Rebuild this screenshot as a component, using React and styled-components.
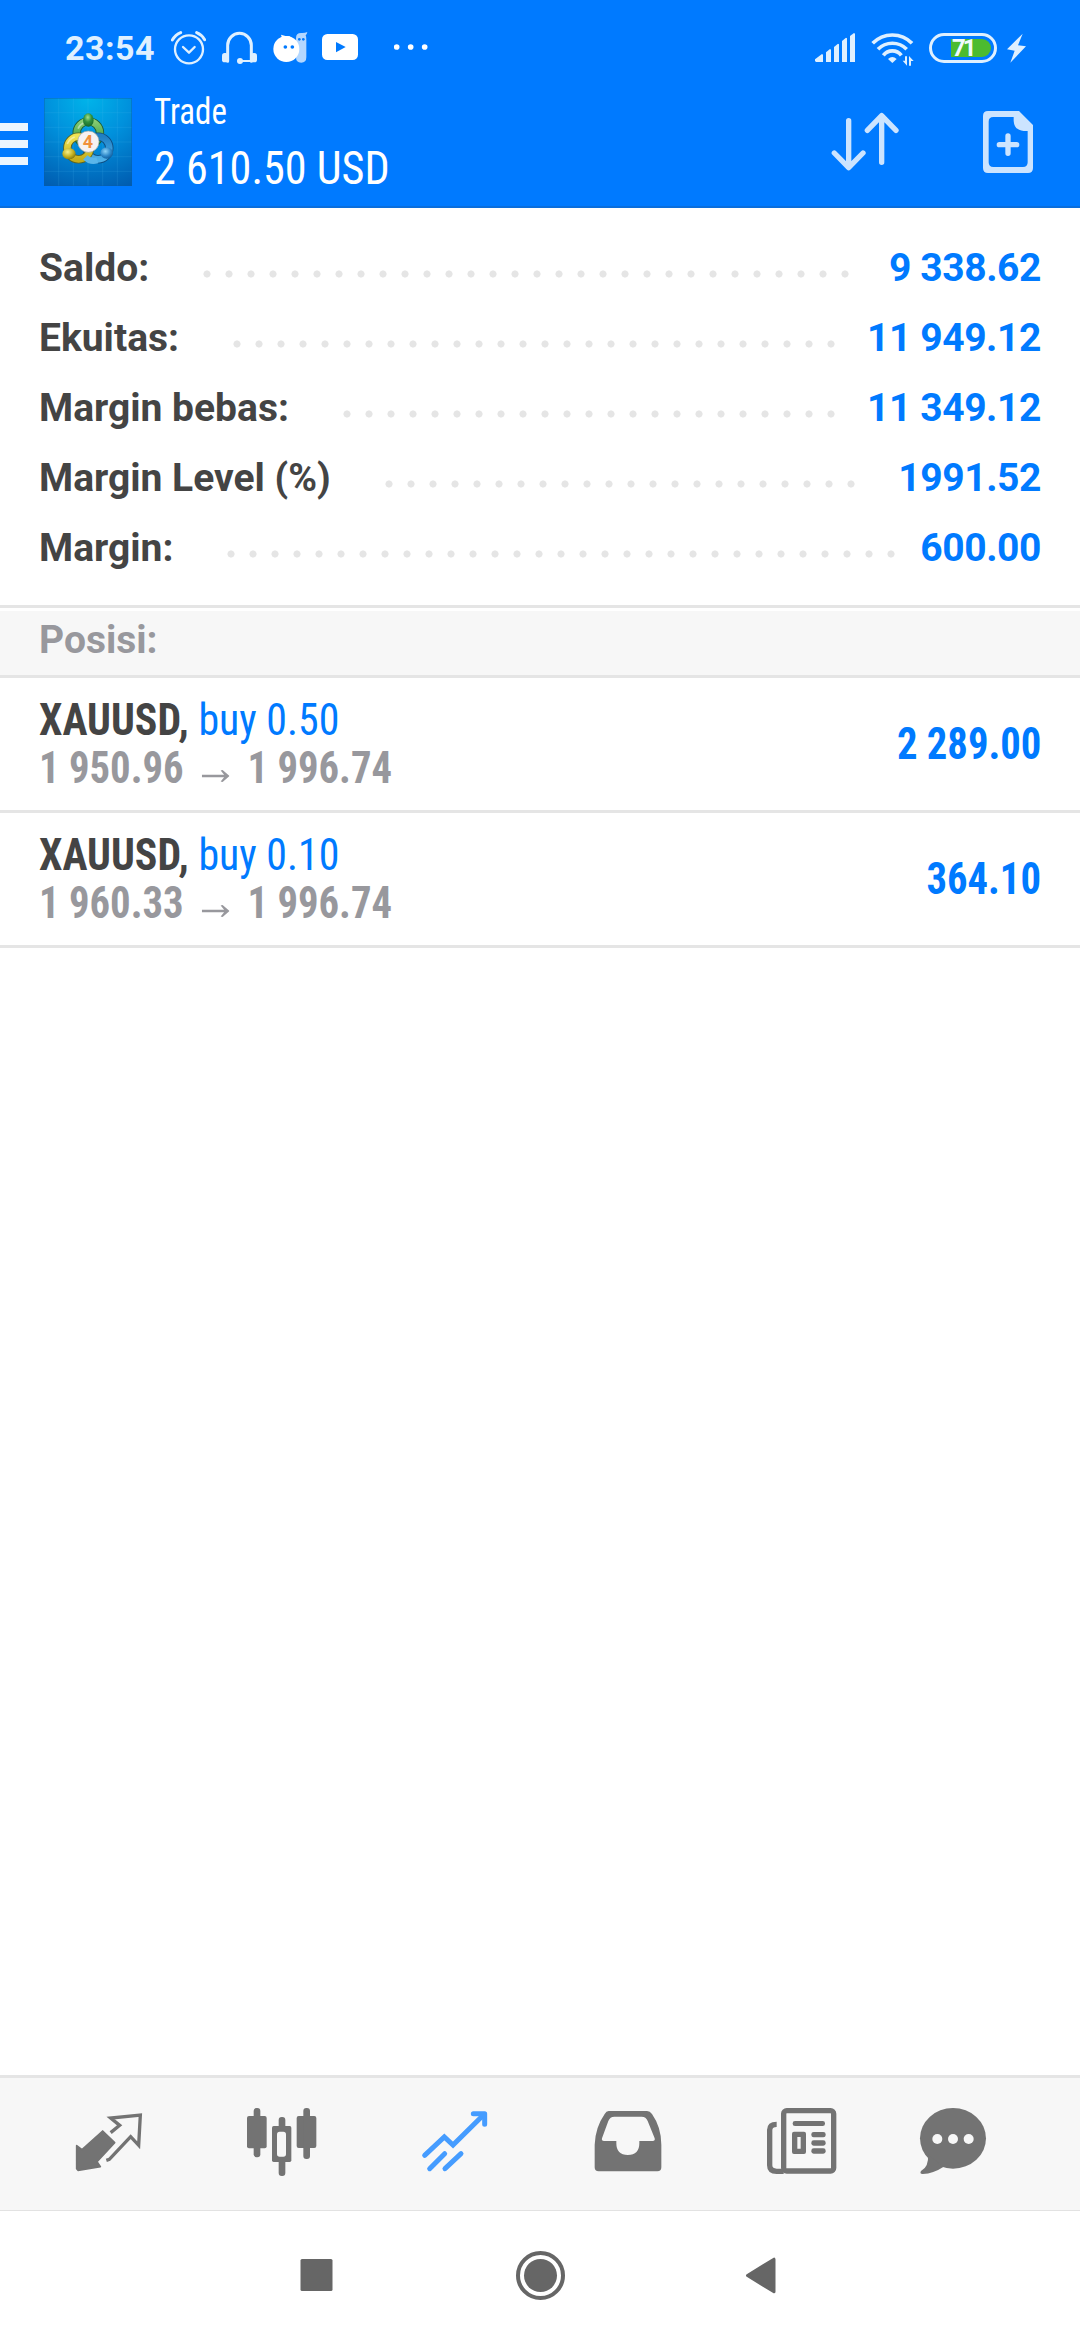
import React from "react";
import styled, { createGlobalStyle } from "styled-components";

const summary = [
  { label: "Saldo:", value: "9 338.62", dots: 30 },
  { label: "Ekuitas:", value: "11 949.12", dots: 28 },
  { label: "Margin bebas:", value: "11 349.12", dots: 23 },
  { label: "Margin Level (%)", value: "1991.52", dots: 22 },
  { label: "Margin:", value: "600.00", dots: 31 },
];

const positions = [
  { symbol: "XAUUSD,", side: "buy 0.50", open: "1 950.96", current: "1 996.74", profit: "2 289.00" },
  { symbol: "XAUUSD,", side: "buy 0.10", open: "1 960.33", current: "1 996.74", profit: "364.10" },
];

function StatusBar() {
  return (
    <StatusContainer>
      <Clock>23:54</Clock>
      <StatusIcon $width={35} $gap={16} viewBox="0 0 105 108">
        <g fill="none" stroke="#dff0ff" strokeWidth="7" strokeLinecap="round">
          <circle cx="54" cy="58" r="42" />
          <path d="M36 51 L54 68 L71 51" strokeLinejoin="round" />
          <path d="M4 30 Q14 14 29 8 M77 8 Q92 14 101 29" strokeWidth="9" />
        </g>
      </StatusIcon>
      <StatusIcon $width={35} $gap={16} viewBox="0 0 105 108">
        <path d="M17 94 V46 A35.5 36 0 0 1 88 46 V94" fill="none" stroke="#dff0ff" strokeWidth="9" strokeLinecap="round" />
        <rect x="0" y="69" width="18" height="28" rx="8" fill="#dff0ff" />
        <rect x="87" y="69" width="18" height="28" rx="8" fill="#dff0ff" />
        <path d="M54 93 H90" stroke="#dff0ff" strokeWidth="6" />
        <circle cx="54" cy="93" r="9" fill="#dff0ff" />
      </StatusIcon>
      <StatusIcon $width={35} $gap={14} viewBox="0 0 105 108">
        <path d="M69 24 Q69 9 84 9 Q94 10 103 6 Q102 13 98 16 Q100 20 100 28 V82 Q100 98 84.500 98 Q69 98 69 82Z" fill="#b3d7ff" />
        <circle cx="79" cy="28" r="4" fill="#007aff" />
        <circle cx="91" cy="28" r="4" fill="#007aff" />
        <circle cx="40" cy="57" r="39" fill="#fff" />
        <path d="M27 24 L24 14 Q38 19 50 19 L56 26Z" fill="#fff" />
        <circle cx="37" cy="51" r="5.500" fill="#007aff" />
        <circle cx="58" cy="51" r="5.500" fill="#007aff" />
      </StatusIcon>
      <StatusIcon $width={36} $gap={36} viewBox="0 0 108 108">
        <rect y="12" width="108" height="78" rx="16" fill="#fff" />
        <path d="M42 36 L71 51 L42 67Z" fill="#007aff" />
      </StatusIcon>
      <StatusIcon $width={34} viewBox="0 0 102 108" fill="#fff">
        <circle cx="8" cy="51" r="8.500" />
        <circle cx="50" cy="51" r="8.500" />
        <circle cx="92" cy="51" r="8.500" />
      </StatusIcon>

      <StatusRight>
        <StatusIcon $width={40} $gap={16} viewBox="0 0 120 108" fill="#dff0ff">
          <path d="M0 93 V88 L21 72 L24 74 V96 H3Z" />
          <path d="M33 67 L45 57 L48 59 V96 H33Z" />
          <path d="M57 51 L69 41 L72 43 V96 H57Z" />
          <path d="M81 33 L93 23 L96 25 V96 H81Z" />
          <path d="M105 18 L117 9 L120 11 V96 H105Z" />
        </StatusIcon>
        <StatusIcon $width={43} $gap={15} viewBox="0 0 129 108">
          <g fill="none" stroke="#dff0ff" strokeWidth="11">
            <path d="M5 40 A82 82 0 0 1 123 40" />
            <path d="M21 58 A60 60 0 0 1 107 58" />
            <path d="M37 76 A34 34 0 0 1 91 76" />
          </g>
          <path d="M51 87 Q64 75 77 87 L64 99Z" fill="#dff0ff" />
          <path d="M108 79 V107 L95 92 H102 V79Z M114 107 V78 L128 93 H120 V107Z" fill="#dff0ff" />
        </StatusIcon>
        <Battery>
          <BatteryLevel>71</BatteryLevel>
        </Battery>
        <StatusIcon $width={19} viewBox="0 0 57 108">
          <path d="M47 11 L0 58 L23 62 L10 98 L57 49 L33 46Z" fill="#dff0ff" />
        </StatusIcon>
      </StatusRight>
    </StatusContainer>
  );
}

function AppLogo() {
  return (
    <LogoSvg viewBox="0 0 264 264">
      <defs>
        <radialGradient id="sky" cx="0.5" cy="0" r="1.1">
          <stop offset="0" stopColor="#00b4ea" />
          <stop offset="0.45" stopColor="#0090dc" />
          <stop offset="1" stopColor="#005cb0" />
        </radialGradient>
        <linearGradient id="green" x1="0" y1="0" x2="0" y2="1">
          <stop offset="0" stopColor="#86cc72" />
          <stop offset="1" stopColor="#2f8f3a" />
        </linearGradient>
        <linearGradient id="yellow" x1="0" y1="0" x2="0" y2="1">
          <stop offset="0" stopColor="#f2e454" />
          <stop offset="1" stopColor="#c4ae1c" />
        </linearGradient>
        <linearGradient id="blue" x1="0" y1="0" x2="0" y2="1">
          <stop offset="0" stopColor="#1f7fc4" />
          <stop offset="1" stopColor="#4db0e8" />
        </linearGradient>
        <radialGradient id="greenKnob" cx="0.45" cy="0.3" r="0.7">
          <stop offset="0" stopColor="#a5e08c" />
          <stop offset="0.5" stopColor="#2f9140" />
          <stop offset="1" stopColor="#176a2a" />
        </radialGradient>
        <radialGradient id="yellowKnob" cx="0.4" cy="0.35" r="0.7">
          <stop offset="0" stopColor="#f6f08c" />
          <stop offset="0.6" stopColor="#c2b020" />
          <stop offset="1" stopColor="#7d7210" />
        </radialGradient>
        <radialGradient id="blueKnob" cx="0.4" cy="0.35" r="0.7">
          <stop offset="0" stopColor="#8ed4f8" />
          <stop offset="0.6" stopColor="#2b86c8" />
          <stop offset="1" stopColor="#0f5a98" />
        </radialGradient>
      </defs>
      <rect width="264" height="264" fill="url(#sky)" />
      <path
        d="M44 0V264 M88 0V264 M132 0V264 M176 0V264 M220 0V264 M0 44H264 M0 88H264 M0 132H264 M0 176H264 M0 220H264"
        stroke="#5cc4f4"
        strokeOpacity="0.22"
        strokeWidth="2"
      />
      <rect x="1" y="1" width="262" height="262" fill="none" stroke="#0a5ea8" strokeOpacity="0.6" strokeWidth="2" />
      <g fill="none">
        <circle cx="133" cy="105" r="35" stroke="#1d5c34" strokeWidth="25" />
        <circle cx="133" cy="105" r="35" stroke="url(#green)" strokeWidth="20" />
        <circle cx="162" cy="150" r="34" stroke="#0d4c80" strokeWidth="25" />
        <circle cx="162" cy="150" r="34" stroke="url(#blue)" strokeWidth="20" />
        <circle cx="104" cy="150" r="34" stroke="#5d6420" strokeWidth="25" />
        <circle cx="104" cy="150" r="34" stroke="url(#yellow)" strokeWidth="20" />
        <path d="M70 138 A36 36 0 0 1 92 117 M102 92 A34 34 0 0 1 118 75" stroke="#fff" strokeOpacity="0.45" strokeWidth="5" />
        <path d="M124 178 A36 36 0 0 0 160 187" stroke="#5ab6ea" strokeWidth="18" />
      </g>
      <ellipse cx="133" cy="66" rx="16" ry="20" fill="url(#greenKnob)" />
      <ellipse cx="75" cy="167" rx="20" ry="17" fill="url(#yellowKnob)" />
      <ellipse cx="188" cy="165" rx="19" ry="17" fill="url(#blueKnob)" />
      <circle cx="133" cy="131" r="32" fill="#f6f2f2" stroke="#9aa3a0" strokeWidth="2" />
      <text x="132" y="150" textAnchor="middle" fontFamily="Roboto, sans-serif" fontSize="54" fontWeight="700" fill="#f0913c">
        4
      </text>
    </LogoSvg>
  );
}

function Header() {
  return (
    <HeaderContainer>
      <StatusBar />
      <Toolbar>
        <MenuButton aria-label="menu">
          <span />
          <span />
          <span />
        </MenuButton>
        <AppLogo />
        <Titles>
          <Title $scale={0.89}>Trade</Title>
          <Amount $scale={0.94}>2 610.50 USD</Amount>
        </Titles>
        <SortIcon viewBox="0 0 204 180">
          <path d="M53 26 V166 M10 123 L53 167 L96 123 M152 151 V12 M109 55 L152 11 L195 55" />
        </SortIcon>
        <NewOrderIcon viewBox="0 0 150 186">
          <path
            fillRule="evenodd"
            d="M15 0 H108 L150 42 V171 Q150 186 135 186 H15 Q0 186 0 171 V15 Q0 0 15 0Z M31 18 Q17 18 17 32 V154 Q17 168 31 168 H120 Q134 168 134 154 V60 H122 Q94 58 92 30 V18Z"
          />
          <path d="M49 101 H101 M75 75 V127" stroke="#cce4ff" strokeWidth="16" strokeLinecap="round" />
        </NewOrderIcon>
      </Toolbar>
    </HeaderContainer>
  );
}

function TabBar() {
  return (
    <Tabs>
      <Tab>
        <TabIcon viewBox="0 0 216 216">
          <path
            d="M89 69 L125 104 L72 161 L82 176 L15 187 L11 182 V113 L27 125Z"
            strokeWidth="5"
            stroke="currentColor"
            strokeLinejoin="round"
          />
          <path
            d="M113 74 L140 52 L113 30 L202 21 L197 112 L173 86 L109 154 L100 157"
            fill="none"
            stroke="currentColor"
            strokeWidth="10"
          />
        </TabIcon>
      </Tab>
      <Tab>
        <TabIcon viewBox="0 0 216 216">
          <rect x="3" y="24" width="59" height="97" rx="6" />
          <rect x="23" y="0" width="20" height="148" rx="9" />
          <rect x="152" y="24" width="59" height="96" rx="6" />
          <rect x="172" y="0" width="20" height="153" rx="9" />
          <rect x="98" y="27" width="20" height="177" rx="9" />
          <rect x="78" y="54" width="58" height="108" rx="5" />
          <rect x="93" y="71" width="27" height="75" rx="8" fill="#f7f7f7" />
        </TabIcon>
      </Tab>
      <Tab $active>
        <TabIcon viewBox="0 0 216 216">
          <g fill="none" stroke="currentColor" strokeWidth="15" strokeLinecap="round">
            <path d="M17 142 L76 87 L102 111 L194 20" />
            <path d="M163 17 H197 V49" strokeLinejoin="round" />
            <path d="M32 182 L77 137 M78 182 L126 137" />
          </g>
        </TabIcon>
      </Tab>
      <Tab>
        <TabIcon viewBox="0 0 216 216">
          <path
            fillRule="evenodd"
            d="M50 9 H165 Q174 9 180 18 Q208 58 208 110 V178 Q208 190 196 190 H20 Q8 190 8 178 V110 Q10 58 38 18 Q43 9 50 9Z M73 99 H36 Q28 99 30 91 L49 39 Q54 26 67 26 H149 Q162 26 167 39 L188 91 Q190 99 182 99 H142 V106 Q142 141 107.500 141 Q73 141 73 106Z"
          />
        </TabIcon>
      </Tab>
      <Tab>
        <TabIcon viewBox="0 0 216 216">
          <g fill="none" stroke="currentColor" strokeWidth="16">
            <rect x="56" y="8" width="150" height="181" rx="9" />
            <path d="M35 49 Q14 49 14 66 V172 Q14 190 35 190 H56" />
          </g>
          <rect x="83" y="39" width="97" height="15" rx="7" />
          <path fillRule="evenodd" d="M87 71 H117 Q123 71 123 77 V132 Q123 138 117 138 H87 Q81 138 81 132 V77 Q81 71 87 71Z M97 87 V122 H107 V87Z" />
          <rect x="139" y="72" width="43" height="16" rx="7" />
          <rect x="139" y="97" width="43" height="16" rx="7" />
          <rect x="139" y="121" width="43" height="16" rx="7" />
        </TabIcon>
      </Tab>
      <Tab $width={132}>
        <TabIcon viewBox="0 0 216 216">
          <ellipse cx="108" cy="91" rx="99" ry="91" />
          <path d="M33 140 Q36 176 12 189 Q7 198 17 198 Q50 196 80 176Z" />
          <g fill="#f7f7f7">
            <circle cx="61" cy="93" r="15" />
            <circle cx="108" cy="93" r="15" />
            <circle cx="155" cy="93" r="15" />
          </g>
        </TabIcon>
      </Tab>
    </Tabs>
  );
}

function SystemNav() {
  return (
    <NavContainer>
      <NavIcon viewBox="0 0 49 49">
        <rect x="8.500" y="8" width="32" height="32" rx="1.500" />
      </NavIcon>
      <NavIcon viewBox="0 0 49 49">
        <circle cx="24.500" cy="24.500" r="22.500" fill="none" stroke="#666" strokeWidth="4" />
        <circle cx="24.500" cy="24.500" r="16.500" />
      </NavIcon>
      <NavIcon viewBox="0 0 49 49">
        <path d="M7.500 24.500 L34 8.200 V40.800Z" stroke="#666" strokeWidth="3" strokeLinejoin="round" />
      </NavIcon>
    </NavContainer>
  );
}

function App() {
  return (
    <Screen>
      <GlobalStyle />
      <Header />
      <Summary>
        {summary.map((row) => (
          <SummaryRow key={row.label}>
            <span>{row.label}</span>
            <Leader $dots={row.dots} />
            <SummaryValue>{row.value}</SummaryValue>
          </SummaryRow>
        ))}
      </Summary>
      <SectionTitle>Posisi:</SectionTitle>
      {positions.map((position) => (
        <PositionRow key={position.side}>
          <div>
            <PositionLine $scale={0.951}>
              <Symbol>{position.symbol}</Symbol> <Side>{position.side}</Side>
            </PositionLine>
            <PriceLine $scale={0.925}>
              <span>{position.open}</span>
              <PriceArrow viewBox="0 0 28 12" preserveAspectRatio="none">
                <path d="M0 4.700 H22.500 L19 0.500 L21 0 L28 6 L21 12 L19 11.500 L22.500 7.300 H0Z" />
              </PriceArrow>
              <span>{position.current}</span>
            </PriceLine>
          </div>
          <Profit $scale={0.924}>{position.profit}</Profit>
        </PositionRow>
      ))}
      <TabBar />
      <SystemNav />
    </Screen>
  );
}

const GlobalStyle = createGlobalStyle`
  * {
    box-sizing: border-box;
  }
  body {
    margin: 0;
    background: #fff;
    font-family: Roboto, sans-serif;
  }
  svg {
    display: block;
    flex-shrink: 0;
  }
`;

const Screen = styled.div`
  display: flex;
  flex-direction: column;
  width: 1080px;
  height: 2340px;
  overflow: hidden;
  background: #fff;
`;

const HeaderContainer = styled.header`
  height: 208px;
  background: #007aff;
  border-bottom: 2px solid #0a6edc;
`;

const StatusContainer = styled.div`
  display: flex;
  align-items: center;
  height: 76px;
  padding: 20px 54px 0 65px;
`;

const Clock = styled.div`
  width: 90px;
  margin-right: 16px;
  color: #dff0ff;
  font-size: 34px;
  font-weight: 700;
  letter-spacing: 0.5px;
  white-space: nowrap;
`;

const StatusIcon = styled.svg`
  width: ${(props) => props.$width}px;
  height: 36px;
  margin-right: ${(props) => props.$gap || 0}px;
`;

const StatusRight = styled.div`
  display: flex;
  align-items: center;
  margin-left: auto;
`;

const Battery = styled.div`
  display: flex;
  justify-content: flex-end;
  align-items: center;
  width: 68px;
  height: 30px;
  margin-right: 10px;
  padding-right: 3px;
  border: 3px solid #dff0ff;
  border-radius: 15px;
`;

const BatteryLevel = styled.div`
  width: 40px;
  height: 18px;
  padding-left: 1px;
  border-radius: 0 9px 9px 0;
  background: #4cbb2f;
  color: #f0faff;
  font-size: 24px;
  font-weight: 700;
  line-height: 19px;
  letter-spacing: -3px;
`;

const Toolbar = styled.div`
  display: flex;
  align-items: center;
  height: 132px;
  padding-right: 47px;
`;

const MenuButton = styled.div`
  display: flex;
  flex-direction: column;
  gap: 9px;
  width: 28px;
  margin-right: 16px;
  padding-top: 3px;

  span {
    height: 8px;
    background: #ebf5ff;
  }
`;

const LogoSvg = styled.svg`
  width: 88px;
  height: 88px;
`;

// narrow text, squeezed a little further than the font itself
const Condensed = styled.div`
  font-family: "Roboto Condensed", Roboto, sans-serif;
  white-space: nowrap;
  transform: scaleX(${(props) => props.$scale});
  transform-origin: left;
`;

const Titles = styled.div`
  flex: 1;
  margin-left: 22px;
  padding-bottom: 4px;
  color: #fff;
`;

const Title = styled(Condensed)`
  font-size: 37px;
  line-height: 56px;
`;

const Amount = styled(Condensed)`
  font-size: 47px;
  line-height: 56px;
`;

const SortIcon = styled.svg`
  width: 68px;
  height: 60px;
  margin-right: 84px;
  fill: none;
  stroke: #cce4ff;
  stroke-width: 16;
  stroke-linecap: round;
  stroke-linejoin: round;
`;

const NewOrderIcon = styled.svg`
  width: 50px;
  height: 62px;
  fill: #cce4ff;
`;

const Summary = styled.section`
  padding: 25px 39px 22px;
`;

const SummaryRow = styled.div`
  display: flex;
  align-items: center;
  height: 70px;
  color: #444;
  font-size: 39px;
  font-weight: 700;
  white-space: nowrap;
`;

const Leader = styled.div`
  width: ${(props) => props.$dots * 22}px;
  height: 22px;
  margin: 12px 0 0 47px;
  background: radial-gradient(circle, #e5e5e5 3.2px, transparent 3.900px) 0 0 / 22px 22px repeat-x;
`;

const SummaryValue = styled.span`
  margin-left: auto;
  color: #007aff;
  letter-spacing: -0.4px;
`;

const SectionTitle = styled.h2`
  height: 73px;
  margin: 0;
  padding: 0 39px;
  border-top: 3px solid #e5e5e5;
  border-bottom: 3px solid #e5e5e5;
  background: linear-gradient(#fff 3px, #f7f7f7 3px);
  color: #98989d;
  font-size: 39px;
  font-weight: 700;
  line-height: 64px;
`;

const PositionRow = styled.div`
  display: flex;
  justify-content: space-between;
  align-items: center;
  height: 135px;
  padding: 0 39px;
  border-bottom: 3px solid #e5e5e5;
  font-size: 44px;
`;

const PositionLine = styled(Condensed)`
  line-height: 48px;
`;

const Symbol = styled.span`
  color: #444;
  font-weight: 700;
`;

const Side = styled.span`
  color: #007aff;
`;

const PriceLine = styled(Condensed)`
  display: flex;
  align-items: center;
  color: #98989d;
  font-weight: 700;
  line-height: 48px;
`;

const PriceArrow = styled.svg`
  width: 30px;
  height: 12px;
  margin: 15px 19px 0 20px;
  fill: currentColor;
`;

const Profit = styled(Condensed)`
  color: #007aff;
  font-weight: 700;
  transform-origin: right;
`;

const Tabs = styled.nav`
  display: flex;
  height: 136px;
  margin-top: auto;
  padding-left: 22px;
  border-top: 3px solid #e5e5e5;
  border-bottom: 1px solid #e2e2e2;
  background: #f7f7f7;
`;

const Tab = styled.div`
  display: flex;
  justify-content: center;
  align-items: center;
  width: ${(props) => props.$width || 173}px;
  color: ${(props) => (props.$active ? "#459cff" : "#737373")};
`;

const TabIcon = styled.svg`
  width: 72px;
  height: 72px;
  fill: currentColor;
`;

const NavContainer = styled.footer`
  display: flex;
  justify-content: center;
  align-items: center;
  gap: 175px;
  height: 129px;
`;

const NavIcon = styled.svg`
  width: 49px;
  height: 49px;
  fill: #666;
`;

export default App;
